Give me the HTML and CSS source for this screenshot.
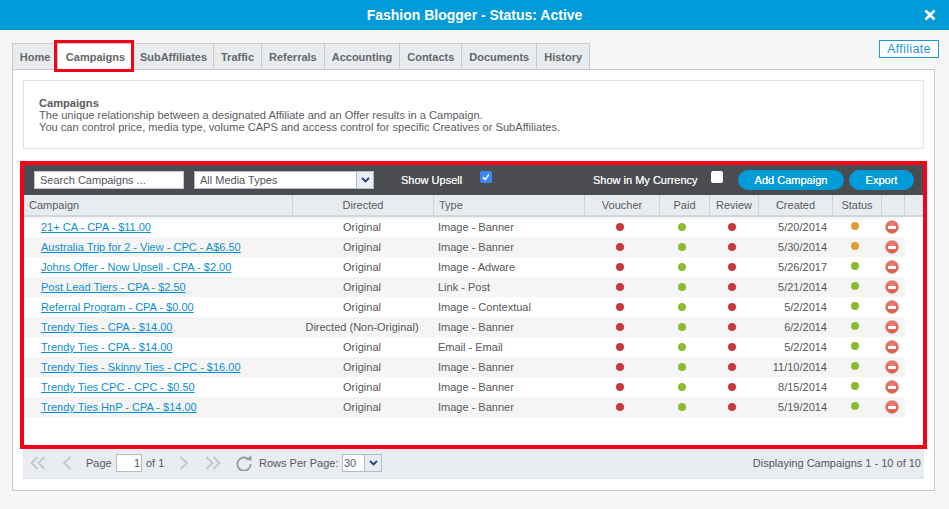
FILE: index.html
```html
<!DOCTYPE html>
<html lang="en">
<head>
<meta charset="utf-8">
<title>Fashion Blogger - Status: Active</title>
<link rel="stylesheet" href="styles.css">
</head>
<body>
<header class="titlebar">
  <h1 class="title">Fashion Blogger - Status: Active</h1>
  <svg class="close" viewBox="0 0 12 12" width="12" height="12" aria-label="Close"><path d="M1.5 1.5 10.5 10.5M10.5 1.5 1.5 10.5" stroke="#fff" stroke-width="2.6" fill="none"/></svg>
</header>
<main class="page">
  <div class="tabrow">
    <nav class="tabs">
      <a class="tab tab-home">Home</a>
      <a class="tab tab-active">Campaigns</a>
      <a class="tab tab-sub">SubAffiliates</a>
      <a class="tab">Traffic</a>
      <a class="tab">Referrals</a>
      <a class="tab">Accounting</a>
      <a class="tab">Contacts</a>
      <a class="tab">Documents</a>
      <a class="tab">History</a>
    </nav>
    <span class="affiliate">Affiliate</span>
  </div>
  <section class="panel">
    <div class="intro">
      <strong>Campaigns</strong><br>
      The unique relationship between a designated Affiliate and an Offer results in a Campaign.<br>
      You can control price, media type, volume CAPS and access control for specific Creatives or SubAffiliates.
    </div>
    <div class="grid-frame">
      <div class="toolbar">
        <div class="search">Search Campaigns ...</div>
        <div class="select media"><span class="select-text">All Media Types</span><span class="select-btn"><svg viewBox="0 0 9 6" width="9" height="6"><path d="M1 1 4.5 4.5 8 1" stroke="#27407a" stroke-width="1.8" fill="none"/></svg></span></div>
        <span class="tool-label upsell">Show Upsell</span>
        <span class="check checked"><svg viewBox="0 0 12 12" width="12" height="12"><path d="M3 6.2 5.2 8.6 9 3.4" stroke="#fff" stroke-width="1.5" fill="none"/></svg></span>
        <span class="tool-label currency">Show in My Currency</span>
        <span class="check"></span>
        <a class="btn btn-add">Add Campaign</a>
        <a class="btn btn-export">Export</a>
      </div>
      <div class="grid-body">
        <table class="grid">
          <colgroup>
            <col class="c-name"><col class="c-dir"><col class="c-type"><col class="c-vou"><col class="c-paid"><col class="c-rev"><col class="c-date"><col class="c-stat"><col class="c-del"><col class="c-rest">
          </colgroup>
          <thead>
            <tr><th class="h-name">Campaign</th><th>Directed</th><th class="h-type">Type</th><th>Voucher</th><th>Paid</th><th>Review</th><th>Created</th><th>Status</th><th></th><th class="h-rest"></th></tr>
          </thead>
          <tbody>
            <tr><td class="name"><a>21+ CA - CPA - $11.00</a></td><td class="dir">Original</td><td class="type">Image - Banner</td><td class="d-vou"><i class="dot red"></i></td><td class="d-paid"><i class="dot green"></i></td><td class="d-rev"><i class="dot red"></i></td><td class="date">5/20/2014</td><td class="d-stat"><i class="dot orange"></i></td><td class="del"><i class="minus"></i></td><td class="rest"></td></tr>
            <tr><td class="name"><a>Australia Trip for 2 - View - CPC - A$6.50</a></td><td class="dir">Original</td><td class="type">Image - Banner</td><td class="d-vou"><i class="dot red"></i></td><td class="d-paid"><i class="dot green"></i></td><td class="d-rev"><i class="dot red"></i></td><td class="date">5/30/2014</td><td class="d-stat"><i class="dot orange"></i></td><td class="del"><i class="minus"></i></td><td class="rest"></td></tr>
            <tr><td class="name"><a>Johns Offer - Now Upsell - CPA - $2.00</a></td><td class="dir">Original</td><td class="type">Image - Adware</td><td class="d-vou"><i class="dot red"></i></td><td class="d-paid"><i class="dot green"></i></td><td class="d-rev"><i class="dot red"></i></td><td class="date">5/26/2017</td><td class="d-stat"><i class="dot green"></i></td><td class="del"><i class="minus"></i></td><td class="rest"></td></tr>
            <tr><td class="name"><a>Post Lead Tiers - CPA - $2.50</a></td><td class="dir">Original</td><td class="type">Link - Post</td><td class="d-vou"><i class="dot red"></i></td><td class="d-paid"><i class="dot green"></i></td><td class="d-rev"><i class="dot red"></i></td><td class="date">5/21/2014</td><td class="d-stat"><i class="dot green"></i></td><td class="del"><i class="minus"></i></td><td class="rest"></td></tr>
            <tr><td class="name"><a>Referral Program - CPA - $0.00</a></td><td class="dir">Original</td><td class="type">Image - Contextual</td><td class="d-vou"><i class="dot red"></i></td><td class="d-paid"><i class="dot green"></i></td><td class="d-rev"><i class="dot red"></i></td><td class="date">5/2/2014</td><td class="d-stat"><i class="dot green"></i></td><td class="del"><i class="minus"></i></td><td class="rest"></td></tr>
            <tr><td class="name"><a>Trendy Ties - CPA - $14.00</a></td><td class="dir">Directed (Non-Original)</td><td class="type">Image - Banner</td><td class="d-vou"><i class="dot red"></i></td><td class="d-paid"><i class="dot green"></i></td><td class="d-rev"><i class="dot red"></i></td><td class="date">6/2/2014</td><td class="d-stat"><i class="dot green"></i></td><td class="del"><i class="minus"></i></td><td class="rest"></td></tr>
            <tr><td class="name"><a>Trendy Ties - CPA - $14.00</a></td><td class="dir">Original</td><td class="type">Email - Email</td><td class="d-vou"><i class="dot red"></i></td><td class="d-paid"><i class="dot green"></i></td><td class="d-rev"><i class="dot red"></i></td><td class="date">5/2/2014</td><td class="d-stat"><i class="dot green"></i></td><td class="del"><i class="minus"></i></td><td class="rest"></td></tr>
            <tr><td class="name"><a>Trendy Ties - Skinny Ties - CPC - $16.00</a></td><td class="dir">Original</td><td class="type">Image - Banner</td><td class="d-vou"><i class="dot red"></i></td><td class="d-paid"><i class="dot green"></i></td><td class="d-rev"><i class="dot red"></i></td><td class="date">11/10/2014</td><td class="d-stat"><i class="dot green"></i></td><td class="del"><i class="minus"></i></td><td class="rest"></td></tr>
            <tr><td class="name"><a>Trendy Ties CPC - CPC - $0.50</a></td><td class="dir">Original</td><td class="type">Image - Banner</td><td class="d-vou"><i class="dot red"></i></td><td class="d-paid"><i class="dot green"></i></td><td class="d-rev"><i class="dot red"></i></td><td class="date">8/15/2014</td><td class="d-stat"><i class="dot green"></i></td><td class="del"><i class="minus"></i></td><td class="rest"></td></tr>
            <tr><td class="name"><a>Trendy Ties HnP - CPA - $14.00</a></td><td class="dir">Original</td><td class="type">Image - Banner</td><td class="d-vou"><i class="dot red"></i></td><td class="d-paid"><i class="dot green"></i></td><td class="d-rev"><i class="dot red"></i></td><td class="date">5/19/2014</td><td class="d-stat"><i class="dot green"></i></td><td class="del"><i class="minus"></i></td><td class="rest"></td></tr>
          </tbody>
        </table>
      </div>
    </div>
    <div class="pager">
      <svg class="pg pg-first" viewBox="0 0 16 14" width="16" height="14"><path d="M7.5 1 1.5 7 7.5 13M14.5 1 8.5 7 14.5 13" stroke="#c4c6c9" stroke-width="1.8" fill="none"/></svg>
      <svg class="pg pg-prev" viewBox="0 0 10 14" width="10" height="14"><path d="M8.5 1 2 7 8.5 13" stroke="#c4c6c9" stroke-width="1.8" fill="none"/></svg>
      <span class="pg-page">Page</span>
      <span class="pg-input">1</span>
      <span class="pg-of">of 1</span>
      <svg class="pg pg-next" viewBox="0 0 10 14" width="10" height="14"><path d="M1.5 1 8 7 1.5 13" stroke="#c4c6c9" stroke-width="1.8" fill="none"/></svg>
      <svg class="pg pg-last" viewBox="0 0 16 14" width="16" height="14"><path d="M1.5 1 7.5 7 1.5 13M8.5 1 14.5 7 8.5 13" stroke="#c4c6c9" stroke-width="1.8" fill="none"/></svg>
      <svg class="pg pg-refresh" viewBox="0 0 16 16" width="16" height="16"><path d="M12.4 4.2A6.6 6.6 0 1 0 14.6 9" stroke="#97999c" stroke-width="1.8" fill="none"/><path d="M10 5 15.6 5.4 15.2 0Z" fill="#97999c"/></svg>
      <span class="pg-rows">Rows Per Page:</span>
      <div class="select rows"><span class="select-text">30</span><span class="select-btn"><svg viewBox="0 0 9 6" width="9" height="6"><path d="M1 1 4.5 4.5 8 1" stroke="#27407a" stroke-width="1.8" fill="none"/></svg></span></div>
      <span class="pg-info">Displaying Campaigns 1 - 10 of 10</span>
    </div>
  </section>
</main>
</body>
</html>
```
FILE: styles.css
```css
* { box-sizing: border-box; }
html, body { margin: 0; height: 100%; }
body {
  width: 949px;
  height: 509px;
  overflow: hidden;
  background: #f6f6f6;
  color: #58585a;
  font-family: "Liberation Sans", Arial, sans-serif;
  font-size: 11px;
}
.titlebar {
  height: 30px;
  background: #009bd9;
  display: flex;
  align-items: center;
  justify-content: center;
  position: relative;
}
.title { margin: 0; color: #fff; font-size: 14px; font-weight: bold; }
.close { position: absolute; left: 924px; top: 9px; }
.page { padding: 10px 14px 0 12px; }
.tabrow { display: flex; height: 29px; justify-content: space-between; }
.tabs { display: flex; align-self: flex-end; height: 26px; border: 1px solid #c9c9cd; border-bottom: 0; }
.tab {
  display: flex;
  align-items: center;
  justify-content: center;
  height: 25px;
  background: #e9ecef;
  border-left: 1px solid #c9c9cd;
  font-weight: bold;
  color: #666668;
  padding: 0 7px;
}
.tab-home { border-left: 0; width: 44px; padding: 0; }
.tab-sub { width: 80px; padding: 0; }
.tab-active {
  background: #fff;
  height: 26px;
  position: relative;
  width: 76px;
  padding: 0;
}
.tab-active::after {
  content: "";
  position: absolute;
  left: -4px;
  right: -1px;
  top: -4px;
  bottom: -2px;
  border: 3px solid #fb0019;
}
.affiliate {
  width: 60px;
  height: 18px;
  margin-right: -4px;
  background: #fff;
  border: 1px solid #1c9ad8;
  color: #1c93d3;
  font-size: 12px;
  letter-spacing: .5px;
  text-align: center;
  line-height: 16px;
}
.panel {
  height: 422px;
  background: #fff;
  border: 1px solid #c9c9cd;
  padding: 10px;
}
.intro {
  height: 69px;
  border: 1px solid #e3e4e8;
  padding: 16px 15px 0;
  font-size: 11.1px;
  line-height: 12px;
  color: #5c5c5e;
}
.grid-frame {
  margin: 12px -3px 0;
  height: 288px;
  border: 4px solid #fb0019;
  background: #fff;
}
.toolbar {
  height: 30px;
  background: #4a4c50;
  display: flex;
  align-items: flex-start;
  color: #f2f2f2;
}
.search {
  width: 150px;
  height: 18px;
  margin: 6px 0 0 10px;
  background: #fff;
  border: 1px solid #c7c9d2;
  color: #555;
  padding-left: 5px;
  line-height: 17px;
}
.select {
  display: flex;
  height: 18px;
  background: #fff;
  border: 1px solid #b3b8cc;
  color: #555;
}
.select-text { flex: 1; line-height: 16px; }
.select-btn {
  width: 17px;
  background: #e9ecf2;
  border-left: 1px solid #b3b8cc;
  display: flex;
  align-items: center;
  justify-content: center;
}
.media { width: 180px; margin: 6px 0 0 10px; }
.media .select-text { padding-left: 5px; }
.tool-label { line-height: 30px; text-shadow: 0 0 .5px #fff; }
.upsell { margin-left: 27px; width: 79px; }
.check {
  width: 12px;
  height: 12px;
  margin-top: 6px;
  border-radius: 2px;
  background: #fff;
}
.checked { background: #3b86f4; }
.check svg { display: block; }
.currency { margin-left: 101px; width: 118px; }
.btn {
  height: 20px;
  margin-top: 5px;
  border-radius: 10px;
  background: #009bd9;
  color: #fff;
  text-align: center;
  line-height: 20px;
  text-shadow: 0 0 .5px #fff;
}
.btn-add { width: 106px; margin-left: 15px; }
.btn-export { width: 65px; margin-left: 5px; }
.grid-body { background: #fff; }
.grid {
  table-layout: fixed;
  border-collapse: separate;
  border-spacing: 0;
  width: 899px;
}
.c-name { width: 269px; }
.c-dir { width: 141px; }
.c-type { width: 151px; }
.c-vou { width: 75px; }
.c-paid { width: 50px; }
.c-rev { width: 49px; }
.c-date { width: 74px; }
.c-stat { width: 49px; }
.c-del { width: 23px; }
.c-rest { width: 18px; }
th {
  height: 22px;
  padding: 0;
  background: #e9ecef;
  border-right: 1px solid #cfd2d6;
  border-bottom: 2px solid #d2d5d9;
  font-weight: normal;
  text-align: center;
  color: #5a5a5c;
  vertical-align: middle;
}
th.h-rest { border-right: 0; }
.h-name { text-align: left; padding-left: 5px; }
.h-type { text-align: left; padding-left: 5px; }
td {
  height: 20px;
  padding: 0;
  white-space: nowrap;
  vertical-align: middle;
}
tbody tr:first-child td { background: linear-gradient(#f0f1f3, #fff 4px); }
tbody tr:nth-child(even) td { background: #f5f5f5; }
tbody tr td.rest { background: #fff; }
.name { padding-left: 17px; }
.name a { color: #0b8fd2; text-decoration: underline; }
.dir { text-align: center; padding-right: 3px; }
.type { padding-left: 4px; }
.date { text-align: right; padding-right: 6px; }
.d-vou, .d-paid, .d-rev, .d-stat { text-align: center; line-height: 0; }
.d-vou { padding-right: 5px; }
.d-paid { padding-right: 6px; }
.d-rev { padding-right: 5px; }
.d-stat { padding-right: 5px; padding-bottom: 2px; }
.dot { display: inline-block; width: 8px; height: 8px; border-radius: 50%; }
.red { background: #c8393f; }
.green { background: #8cbb32; }
.orange { background: #e19d34; }
.del { line-height: 0; padding-left: 3px; }
.minus {
  display: inline-block;
  width: 14px;
  height: 14px;
  border-radius: 50%;
  background: radial-gradient(circle at 50% 35%, #f08a78, #d9453c);
  border: 1px solid #e0a49c;
  position: relative;
}
.minus::after {
  content: "";
  position: absolute;
  left: 2px;
  right: 2px;
  top: 4.5px;
  height: 3px;
  background: #fff;
  border-radius: 1px;
}
.pager {
  height: 30px;
  background: #e9ecf0;
  border-bottom: 1px solid #dfe2e6;
  display: flex;
  align-items: flex-start;
}
.pg { flex: none; margin-top: 7px; }
.pg-first { margin-left: 7px; }
.pg-prev { margin-left: 16px; }
.pg-page { margin-left: 14px; width: 30px; line-height: 28px; }
.pg-input {
  width: 26px;
  height: 18px;
  margin-top: 5px;
  background: #fff;
  border: 1px solid #b9bcc4;
  text-align: right;
  padding-right: 1px;
  line-height: 16px;
}
.pg-of { margin-left: 4px; width: 33px; line-height: 28px; }
.pg-last { margin-left: 16px; }
.pg-next { margin-left: 0; }
.pg-refresh { margin-left: 15px; margin-top: 6px; }
.pg-rows { margin-left: 7px; width: 83px; line-height: 28px; }
.rows { width: 40px; margin-top: 5px; }
.rows .select-text { padding-left: 1px; }
.pg-info { margin-left: auto; padding-right: 3px; line-height: 28px; }
```
